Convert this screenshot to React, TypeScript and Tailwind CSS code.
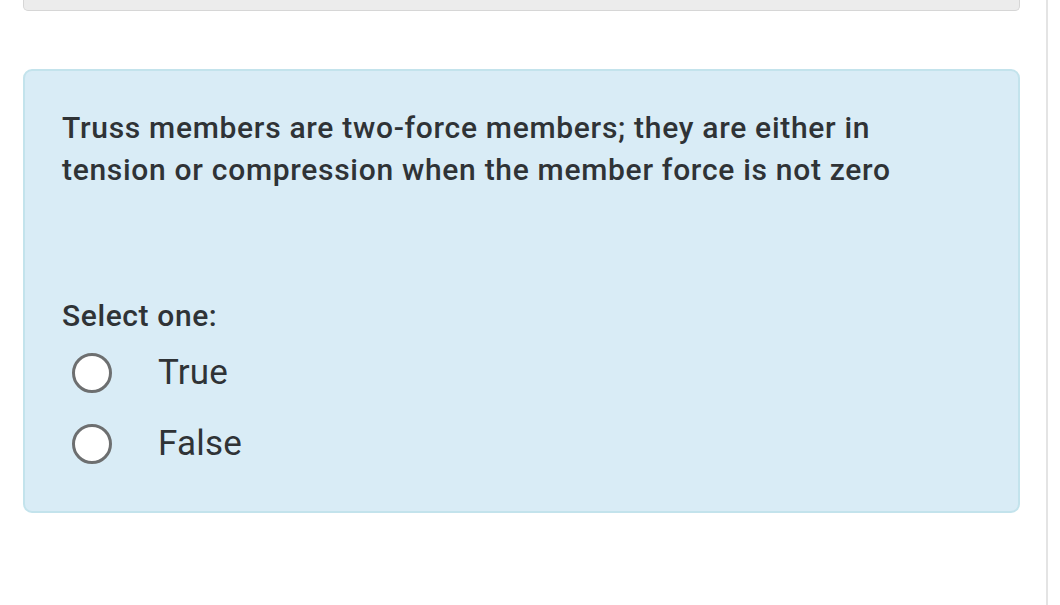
export default function App() {
  const options = ['True', 'False']

  return (
    <div className="relative h-[605px] w-[1060px] overflow-hidden bg-white font-['Roboto',sans-serif] text-[#2f3336]">
      {/* right rail line */}
      <div className="absolute right-[12px] top-0 h-full w-[2px] bg-[#e4e4e4]" />

      <div className="ml-[23px] w-[997px]">
        <div className="h-[11px] rounded-b-[5px] border border-t-0 border-[#d6d6d6] bg-[#ececec]" />

        <div className="mt-[58px] h-[444px] rounded-[9px] border-2 border-[#c3e3ec] bg-[#d9ecf6] px-[37px] pt-[36px]">
          <p className="text-[30px] leading-[42px] font-medium tracking-[0.7px]">
            Truss members are two-force members; they are either in
            <br />
            tension or compression when the member force is not zero
          </p>

          <p className="mt-[105px] text-[30px] leading-[40px] font-medium tracking-[0.6px]">Select one:</p>

          <div className="mt-[17px] flex flex-col gap-[31px]">
            {options.map((o) => (
              <label key={o} className="flex items-center">
                <span className="ml-[10px] h-[40px] w-[40px] rounded-full border-[3px] border-[#6d6f70] bg-white" />
                <span className="ml-[46px] text-[35px] leading-[40px] tracking-[0.2px]">{o}</span>
              </label>
            ))}
          </div>
        </div>
      </div>
    </div>
  )
}
